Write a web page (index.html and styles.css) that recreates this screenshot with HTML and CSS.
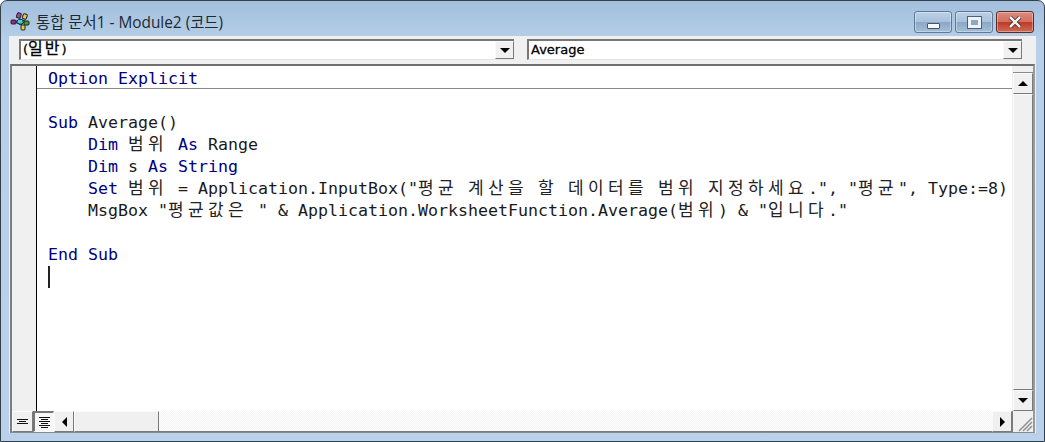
FILE: index.html
```html
<!DOCTYPE html>
<html lang="ko">
<head>
<meta charset="utf-8">
<title>Module2</title>
<link rel="stylesheet" href="styles.css">
</head>
<body>
<div class="window">
  <header class="titlebar">
    <svg class="appicon" width="20" height="20" viewBox="0 0 20 20">
      <path d="M5 11 L10 8 L15 10 L11 14 Z" fill="#2a8a8a" stroke="#123" stroke-width="1"/>
      <rect x="7" y="2" width="4" height="5" rx="1" fill="#b040b0" stroke="#222" transform="rotate(20 9 4)"/>
      <rect x="13" y="3" width="4" height="5" rx="1" fill="#e0d040" stroke="#222" transform="rotate(20 15 5)"/>
      <rect x="1" y="9" width="5" height="4" rx="1" fill="#a02090" stroke="#222"/>
      <rect x="14" y="10" width="5" height="4" rx="1" fill="#40a040" stroke="#222"/>
      <rect x="11" y="14" width="4" height="5" rx="1" fill="#e0d040" stroke="#222"/>
      <rect x="8" y="9" width="4" height="3" fill="#40d0e0"/>
    </svg>
    <span class="title">통합 문서1 - Module2 (코드)</span>
    <div class="controls">
      <div class="ctl"><span class="min-glyph"></span></div>
      <div class="ctl"><span class="max-glyph"></span></div>
      <div class="ctl close">
        <svg width="14" height="12" viewBox="0 0 14 12"><path d="M2 1 L12 11 M12 1 L2 11" stroke="#3a1a1a" stroke-width="4"/><path d="M2 1 L12 11 M12 1 L2 11" stroke="#f4f0f0" stroke-width="2.6"/></svg>
      </div>
    </div>
  </header>
  <div class="client">
    <div class="combos">
      <div class="combo"><span class="combo-text">(<span class="combo-ko">일반</span>)</span><div class="btn arrow-btn"><i class="tri down"></i></div></div>
      <div class="combo"><span class="combo-text">Average</span><div class="btn arrow-btn"><i class="tri down"></i></div></div>
    </div>
    <div class="pane">
      <div class="margin"></div>
      <div class="code">
        <div class="line sep"><span class="kw">Option Explicit</span></div>
        <div class="line"></div>
        <div class="line"><span class="kw">Sub</span> Average()</div>
        <div class="line in"><span class="kw">Dim</span> <span class="ko">범위</span> <span class="kw">As</span> Range</div>
        <div class="line in"><span class="kw">Dim</span> s <span class="kw">As</span> <span class="kw">String</span></div>
        <div class="line in"><span class="kw">Set</span> <span class="ko">범위</span> = Application.InputBox("<span class="ko">평균</span> <span class="ko">계산을</span> <span class="ko">할</span> <span class="ko">데이터를</span> <span class="ko">범위</span> <span class="ko">지정하세요</span>.", "<span class="ko">평균</span>", Type:=8)</div>
        <div class="line in">MsgBox "<span class="ko">평균값은</span> " &amp; Application.WorksheetFunction.Average(<span class="ko">범위</span>) &amp; "<span class="ko">입니다</span>."</div>
        <div class="line"></div>
        <div class="line"><span class="kw">End Sub</span></div>
        <div class="line"><i class="caret"></i></div>
      </div>
      <div class="vscroll">
        <div class="splitter"></div>
        <div class="btn sb-btn"><i class="tri up"></i></div>
        <div class="sb-thumb"></div>
        <div class="btn sb-btn"><i class="tri down"></i></div>
      </div>
      <div class="bottom">
        <div class="btn view"><svg width="11" height="6" viewBox="0 0 11 6"><path d="M0 .5H11M2 2.5H9M0 4.5H11" stroke="#111"/></svg></div>
        <div class="btn view on"><svg width="11" height="11" viewBox="0 0 11 11"><path d="M0 .5H11M2 2.5H9M0 4.5H11M2 6.5H9M0 8.5H11M2 10.5H9" stroke="#111"/></svg></div>
        <div class="btn sb-h"><i class="tri lft"></i></div>
        <div class="btn thumb-h"></div>
        <div class="track"></div>
        <div class="btn sb-h"><i class="tri rgt"></i></div>
      </div>
      <div class="grip">
        <svg width="19" height="19" viewBox="0 0 19 19"><path d="M18 5 L5 18 M18 9 L9 18 M18 13 L13 18" stroke="#8f8f8f" stroke-width="1.5"/></svg>
      </div>
    </div>
  </div>
</div>
</body>
</html>
```
FILE: styles.css
```css
* { box-sizing: border-box; }
html, body { margin: 0; height: 442px; overflow: hidden; background: #fff; }
.window {
  width: 1045px; height: 442px;
  display: flex; flex-direction: column;
  border: 1px solid #33404c;
  border-radius: 7px 7px 0 0;
  background: linear-gradient(#a3bfdc 0, #b7cfe8 40px, #b9d1ea 100%);
  padding: 0 8px 8px;
}
.titlebar { height: 35px; display: flex; align-items: center; padding: 0 0 0 1px; flex: none; }
.appicon { flex: none; margin-top: 5px; }
.title {
  margin: 6px 0 0 6px;
  font: 15.4px "Open Sans", "Noto Sans CJK KR", sans-serif;
  color: #1c2a36;
}
.controls { margin-left: auto; display: flex; gap: 3px; align-self: flex-start; margin-top: 10px; padding-right: 2px; }
.ctl {
  width: 38px; height: 22px;
  border: 1px solid #5f7a97;
  border-radius: 3px;
  background: linear-gradient(#bcd0e6 0, #a9c1dc 48%, #8aa6c4 50%, #a5bfd9 100%);
  display: flex; align-items: center; justify-content: center;
  box-shadow: inset 0 0 0 1px rgba(255,255,255,.35);
}
.ctl.close {
  border-color: #5d2a2a;
  background: linear-gradient(#dc8a7c 0, #d4705f 48%, #bd3a26 50%, #cf6a55 100%);
}
.min-glyph { width: 13px; height: 6px; margin-top: 7px; background: #f6f8fb; border: 1px solid #43566a; border-radius: 1px; }
.max-glyph { width: 13px; height: 11px; border: 3px solid #eef3f8; outline: 1px solid #4d6178; background: #8da8c4; }
.client { flex: 1; min-height: 0; display: flex; flex-direction: column; background: #f0f0f0; }
.combos { height: 28px; flex: none; display: flex; padding: 3px 0 4px 10px; gap: 13px; }
.combo {
  width: 495px;
  height: 21px; display: flex; align-items: stretch; background: #fff;
  border-top: 2px solid #777; border-left: 2px solid #777;
  border-bottom: 1px solid #e4e4e4;
}
.combo-text {
  flex: 1; padding-left: 2px;
  font: 13px/17px "DejaVu Sans", "Noto Sans CJK KR", sans-serif;
  color: #000; -webkit-text-stroke: .3px #000;
}
.combo-ko { font: 16px/0 "Noto Sans CJK KR", sans-serif; letter-spacing: 2px; }
.btn {
  background: #f0f0f0;
  border: 1px solid;
  border-color: #fafafa #7a7a7a #7a7a7a #fafafa;
  display: flex; align-items: center; justify-content: center;
  flex: none;
}
.arrow-btn { width: 19px; }
.tri { display: block; width: 0; height: 0; }
.tri.down { border: 5px solid transparent; border-bottom: 0; border-top: 5px solid #000; }
.tri.up { border: 5px solid transparent; border-top: 0; border-bottom: 5px solid #000; }
.tri.lft { border: 5px solid transparent; border-left: 0; border-right: 5px solid #000; }
.tri.rgt { border: 5px solid transparent; border-right: 0; border-left: 5px solid #000; }
.pane {
  flex: 1; min-height: 0;
  display: grid;
  grid-template-columns: 25px 1fr 21px;
  grid-template-rows: 1fr 21px;
  border-top: 2px solid #6f6f6f;
  border-left: 2px solid #7d7d7d;
  border-right: 2px solid #9a9a9a;
  border-bottom: 1px solid #8a8a8a;
  margin-left: 1px;
  margin-right: 1px;
  background: #f0f0f0;
}
.margin { background: #f0f0f0; border-right: 1px solid #000; grid-row: 1; grid-column: 1; }
.code {
  grid-row: 1; grid-column: 2;
  background: #fff; padding-left: 11px; overflow: hidden; min-width: 0;
  font: 16.61px/22px "DejaVu Sans Mono", "Noto Sans CJK KR", monospace;
  color: #1a1a1a;
}
.line { height: 22px; white-space: pre; }
.line:first-child { margin-top: 2px; }
.sep { position: relative; }
.sep::after { content: ""; position: absolute; left: -11px; right: 0; bottom: 1px; height: 1px; background: #8a8a8a; }
.in { padding-left: 40px; }
.kw { color: #00007f; }
.ko { font: 17px/0 "Noto Sans CJK KR", sans-serif; letter-spacing: 4.36px; color: #222; }
.caret { display: inline-block; width: 2px; height: 22px; background: #222; vertical-align: top; }
.vscroll { grid-row: 1; grid-column: 3; display: flex; flex-direction: column; background: #f0f0f0; padding: 0 0 0 1px; }
.splitter { height: 7px; flex: none; border-bottom: 1px solid #8a8a8a; }
.sb-btn { height: 21px; }
.sb-thumb { flex: 1; background: #f0f0f0; border: 1px solid; border-color: #fafafa #7a7a7a #7a7a7a #fafafa; }
.bottom { grid-row: 2; grid-column: 1 / span 2; display: flex; background: #f0f0f0; min-width: 0; }
.view { width: 21px; }
.view.on { border-color: #777 #fafafa #fafafa #777; border-width: 2px 1px 1px 2px; background: #f6f6f6; }
.sb-h { width: 20px; }
.thumb-h { width: 85px; }
.track { flex: 1; background: repeating-conic-gradient(#f4f4f4 0 25%, #ffffff 0 50%) 0 0 / 2px 2px; border-bottom: 1px solid #7a7a7a; }
.grip { grid-row: 2; grid-column: 3; background: #f0f0f0; display: flex; align-items: flex-end; justify-content: flex-end; border-left: 1px solid #7a7a7a; }
```
